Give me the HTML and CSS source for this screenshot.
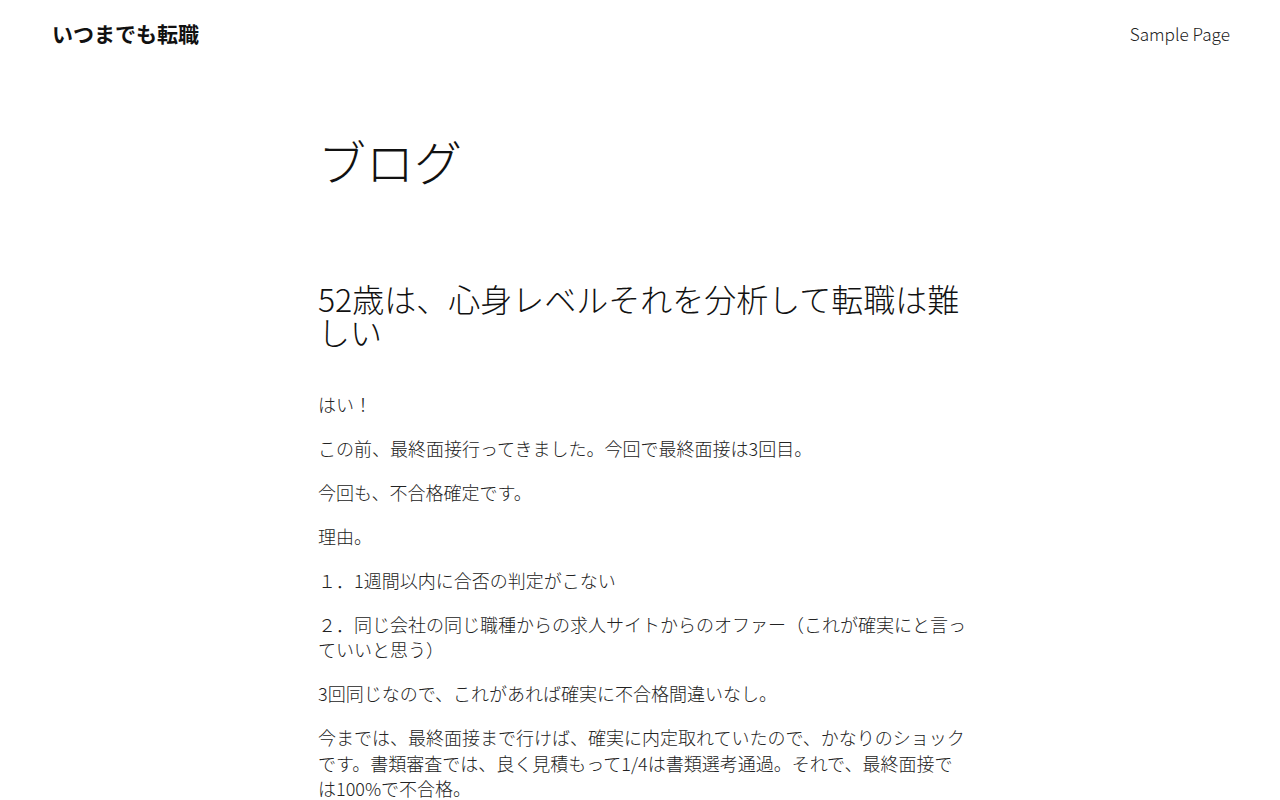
FILE: index.html
```html
<!DOCTYPE html>
<html lang="ja">
<head>
<meta charset="utf-8">
<title>ブログ – いつまでも転職</title>
<link rel="stylesheet" href="styles.css">
</head>
<body>
<header class="site-header">
  <a class="site-title" href="#">いつまでも転職</a>
  <nav class="site-nav"><a href="#">Sample Page</a></nav>
</header>
<main class="content">
  <h1 class="page-title">ブログ</h1>
  <article class="post">
    <h2 class="post-title">52歳は、心身レベルそれを分析して転職は難しい</h2>
    <div class="post-body">
      <p>はい！</p>
      <p>この前、最終面接行ってきました。今回で最終面接は3回目。</p>
      <p>今回も、不合格確定です。</p>
      <p>理由。</p>
      <p>１．1週間以内に合否の判定がこない</p>
      <p>２．同じ会社の同じ職種からの求人サイトからのオファー（これが確実にと言っていいと思う）</p>
      <p>3回同じなので、これがあれば確実に不合格間違いなし。</p>
      <p>今までは、最終面接まで行けば、確実に内定取れていたので、かなりのショックです。書類審査では、良く見積もって1/4は書類選考通過。それで、最終面接では100%で不合格。</p>
    </div>
  </article>
</main>
</body>
</html>
```

FILE: styles.css
```css
html, body {
  margin: 0;
  padding: 0;
  background: #ffffff;
}
body {
  font-family: "Noto Sans CJK JP", "Noto Sans", sans-serif;
  color: #1a1a1a;
  font-weight: 300;
}
a {
  color: inherit;
  text-decoration: none;
}
.site-header {
  display: flex;
  justify-content: space-between;
  align-items: center;
  height: 66px;
  padding: 0 50px 0 52px;
}
.site-title {
  font-size: 21px;
  font-weight: 700;
  color: #111;
}
.site-nav {
  font-size: 17.2px;
  font-weight: 300;
  color: #222;
}
.content {
  width: 650px;
  margin-left: calc(50% - 322px);
}
.page-title {
  font-size: 48px;
  font-weight: 300;
  line-height: 1.2;
  margin: 66px 0 0 0;
  color: #111;
}
.post-title {
  font-size: 32px;
  font-weight: 300;
  line-height: 1.05;
  margin: 92px 0 0 0;
  color: #111;
}
.post-body {
  margin-top: 43px;
  font-size: 18px;
  line-height: 25.5px;
  color: #222;
}
.post-body p {
  margin: 0 0 18.5px 0;
}
```
